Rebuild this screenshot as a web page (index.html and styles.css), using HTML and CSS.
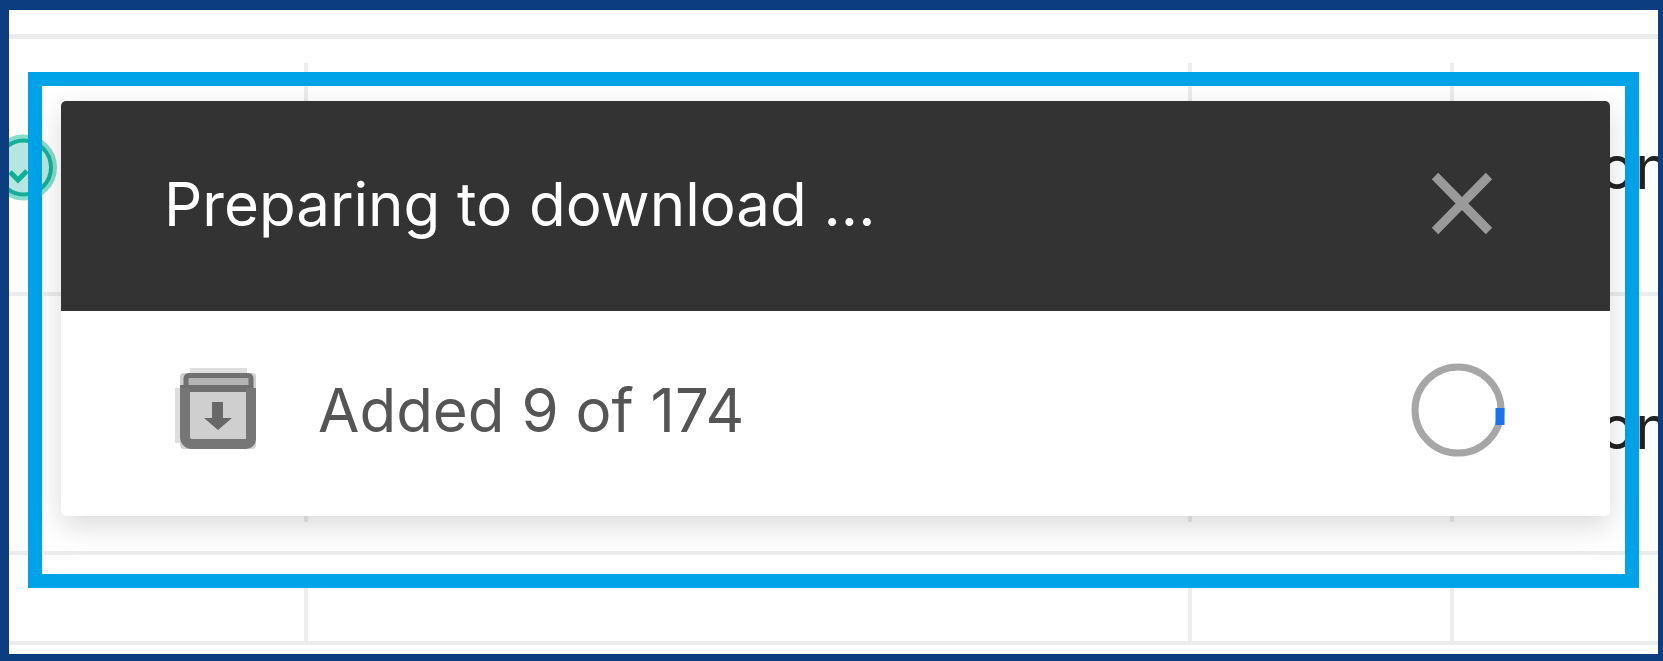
FILE: index.html
```html
<!DOCTYPE html>
<html lang="en">
<head>
  <meta charset="UTF-8">
  <title>Preparing to download</title>
  <meta name="viewport" content="width=device-width, initial-scale=1.0">
  <link rel="stylesheet" href="styles.css">
</head>
<body>

  <div class="frame">

    <div class="table">
      <div class="table-head"></div>

      <div class="table-row row-first">
        <div class="cell">
          <svg class="status-icon" viewBox="0 0 66 68">
            <circle cx="33" cy="34.5" r="31" fill="#b5e7e0" stroke="#86dccd" stroke-width="4"/>
            <circle cx="33" cy="34.5" r="27" fill="none" stroke="#14ae99" stroke-width="4"/>
            <path d="M19 39l8 8 9-9" fill="none" stroke="#0fae98" stroke-width="5"/>
          </svg>
        </div>
        <div class="cell"></div>
        <div class="cell"></div>
        <div class="cell cell-last"><span class="cell-text">on</span></div>
      </div>

      <div class="table-row row-second">
        <div class="cell"></div>
        <div class="cell"></div>
        <div class="cell"></div>
        <div class="cell cell-last"><span class="cell-text">on</span></div>
      </div>

      <div class="table-row row-last">
        <div class="cell"></div>
        <div class="cell"></div>
        <div class="cell"></div>
        <div class="cell cell-last"></div>
      </div>
    </div>

    <!-- highlight box round the toast -->
    <div class="highlight">
      <div class="toast">
        <div class="toast-header">
          <span class="toast-title">Preparing to download ...</span>
          <svg class="toast-close" viewBox="0 0 62 63">
            <path d="M4 4l54 55M58 4L4 59" fill="none" stroke="#9a9a9a" stroke-width="9"/>
          </svg>
        </div>
        <div class="toast-body">
          <svg class="archive-icon" viewBox="0 0 81 81">
            <path d="M15 0h57v5H15zM0 20h5v55H0z" fill="#dedede"/>
            <rect x="5" y="5" width="76" height="76" rx="4" fill="#cfcfcf"/>
            <path d="M14 7.5h59a3 3 0 0 1 3 3V20H11v-9.500a3 3 0 0 1 3-3z" fill="#b4b4b4" stroke="#707070" stroke-width="5"/>
            <path d="M5 20.500h71" fill="none" stroke="#6f6f6f" stroke-width="7"/>
            <path d="M10 20v49a7 7 0 0 0 7 7h54a5 5 0 0 0 5-5V20" fill="none" stroke="#767676" stroke-width="10"/>
            <path d="M37 34h11v16h9L43 62 29 50h8z" fill="#686868"/>
          </svg>
          <span class="toast-status">Added 9 of 174</span>
          <svg class="spinner" viewBox="0 0 94 96">
            <circle cx="47" cy="48" r="43" fill="none" stroke="#a6a6a6" stroke-width="7"/>
            <path d="M89 46v17" fill="none" stroke="#1a73e8" stroke-width="9"/>
          </svg>
        </div>
      </div>
    </div>

  </div>

</body>
</html>
```

FILE: styles.css
```css
* {
  box-sizing: border-box;
}

body {
  margin: 0;
  background: white;
  font-family: 'Inter', 'Liberation Sans', sans-serif;
}

.frame {
  position: relative;
  height: 661px;
  border-style: solid;
  border-color: #0b3d80;
  border-width: 10px 5px 7px 9px;
  background: white;
  overflow: hidden;
}

.table-head {
  height: 29px;
  border-bottom: 5px solid #ececec;
}

.table-row {
  display: grid;
  grid-template-columns: 299px 884px 262px 1fr;
  border-bottom: 4px solid #ececec;
}

.row-first {
  height: 257px;
}

.row-second {
  height: 259px;
}

.row-last {
  height: 90px;
}

.cell {
  margin-top: 24px;
  border-right: 4px solid #ececec;
}

.row-second .cell {
  margin-bottom: 29px;
}

.cell-last {
  border-right: none;
  white-space: nowrap;
}

.cell-text {
  display: block;
  margin-left: 145px;
  color: #222;
  font-size: 60px;
  line-height: 60px;
}

.row-first .cell-text {
  margin-top: 74px;
}

.row-second .cell-text {
  margin-top: 77px;
}

.status-icon {
  display: block;
  width: 66px;
  height: 68px;
  margin: 70px 0 0 -18px;
}

.highlight {
  position: absolute;
  left: 19px;
  top: 62px;
  width: 1611px;
  height: 516px;
  padding: 15px 15px 0 19px;
  border: 14px solid #00a2e8;
}

.toast {
  height: 415px;
  border-radius: 5px;
  background: white;
  box-shadow: 0 10px 30px rgba(0, 0, 0, 0.15);
  overflow: hidden;
}

.toast-header {
  display: flex;
  justify-content: space-between;
  align-items: center;
  height: 210px;
  padding: 0 117px 5px 103px;
  background: #333;
}

.toast-title {
  color: white;
  font-size: 60px;
}

.toast-close {
  width: 62px;
  height: 63px;
}

.toast-body {
  display: flex;
  align-items: center;
  height: 205px;
  padding: 0 105px 7px 114px;
}

.archive-icon {
  width: 81px;
  height: 81px;
  margin: 0 62px 3px 0;
}

.toast-status {
  flex: 1;
  color: #555;
  font-size: 60px;
}

.spinner {
  width: 94px;
  height: 96px;
}
```
